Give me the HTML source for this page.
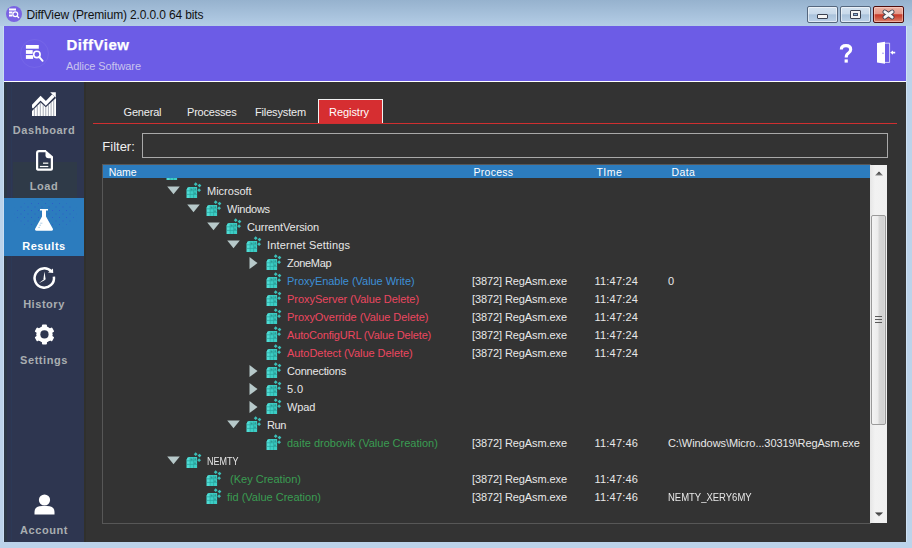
<!DOCTYPE html>
<html><head><meta charset="utf-8">
<style>
*{margin:0;padding:0;box-sizing:border-box}
html,body{width:912px;height:548px;overflow:hidden}
body{position:relative;background:#bcd3ea;font-family:"Liberation Sans",sans-serif}
.a{position:absolute}
.t{position:absolute;white-space:pre;line-height:1}
.tr{font-size:11px;line-height:18px;color:#e8e8e8}
.lbl{position:absolute;white-space:pre;line-height:1;font-weight:bold;font-size:11px;color:#a9aeb1;left:4px;width:80px;text-align:center;letter-spacing:0.55px}
.tab{position:absolute;white-space:pre;line-height:1;font-size:11px;color:#eeeeee}
.hd{position:absolute;white-space:pre;line-height:1;font-size:10.5px;color:#ffffff}
.wb{border-radius:2px}
</style></head><body>
<svg width="0" height="0" style="position:absolute">
 <defs>
  <g id="ri">
   <path d="M0.7 7.4 Q0.9 5.2 3.4 5 H11.1 V15.9 H0.7 Z" fill="#3ccdc5"/>
   <path d="M0.7 7.4 Q0.9 5.2 3.4 5 H4.2 V15.9 H0.7 Z" fill="#4fdcd4"/>
   <path d="M4.1 5.6V15.9M7.6 5.6V15.9M0.7 8.8H11.1M0.7 12.4H11.1" stroke="#2aa49d" stroke-width="0.7"/>
   <circle cx="5.6" cy="7.6" r="1" fill="#2b8a86" opacity="0.8"/>
   <circle cx="9.3" cy="7.2" r="1" fill="#2b8a86" opacity="0.8"/>
   <circle cx="9" cy="11.2" r="1" fill="#2b8a86" opacity="0.7"/>
   <path d="M9.7 0.3L11.6 2.2L9.7 4.1L7.8 2.2Z M13.5 1.7L15.4 3.6L13.5 5.5L11.6 3.6Z M13.1 6.3L15 8.2L13.1 10.1L11.2 8.2Z" fill="#3cbfb8"/>
  </g>
 </defs>
</svg>
<div class="a" style="left:0;top:0;width:912px;height:26px;background:linear-gradient(#96b2ce,#b4cde6)"></div>
<!-- title icon -->
<div class="a" style="left:6px;top:6px;width:16px;height:16px;border-radius:50%;background:#7a63e3"></div>
<svg class="a" style="left:6px;top:6px" width="16" height="16" viewBox="0 0 16 16">
 <path d="M3 3.5H10M3 6.6H6.5M3 9.5H6.5" stroke="#fff" stroke-width="2"/>
 <circle cx="9.3" cy="8.3" r="2.4" fill="none" stroke="#fff" stroke-width="1.2"/>
 <path d="M11 10L13 12" stroke="#fff" stroke-width="1.3"/>
</svg>
<div class="t" style="left:26.5px;top:8.6px;font-size:12px;color:#111;letter-spacing:-0.14px">DiffView (Premium) 2.0.0.0 64 bits</div>
<!-- window buttons -->
<div class="a wb" style="left:807px;top:6px;width:31px;height:17px;border:1px solid #55677e;box-shadow:inset 0 0 0 1px rgba(255,255,255,0.55);background:linear-gradient(#d4e2f0 0%,#c8d9ea 46%,#a9c2db 52%,#bdd2e7 100%)"></div>
<div class="a" style="left:817px;top:14px;width:11px;height:5px;background:#f4f4f4;border:1px solid #3b4150;border-radius:1px"></div>
<div class="a wb" style="left:840px;top:6px;width:31px;height:17px;border:1px solid #55677e;box-shadow:inset 0 0 0 1px rgba(255,255,255,0.55);background:linear-gradient(#d4e2f0 0%,#c8d9ea 46%,#a9c2db 52%,#bdd2e7 100%)"></div>
<div class="a" style="left:850px;top:10px;width:11px;height:9px;background:#f4f4f4;border:1px solid #3b4150;border-radius:1px"></div>
<div class="a" style="left:853px;top:13px;width:5px;height:3px;background:#8db4d6;border:1px solid #45506a"></div>
<div class="a wb" style="left:873px;top:6px;width:31px;height:17px;border:1px solid #4e0c0c;box-shadow:inset 0 0 0 1px rgba(255,220,210,0.5);background:linear-gradient(#eeb3a6 0%,#e49a8a 44%,#c8392a 52%,#cd4f3b 68%,#dc8670 100%)"></div>
<svg class="a" style="left:881px;top:9px" width="15" height="11" viewBox="0 0 15 11"><path d="M3.9 2.9 L11.1 8.1 M11.1 2.9 L3.9 8.1" stroke="#3b3f4c" stroke-width="4.6" stroke-linecap="round"/><path d="M3.9 2.9 L11.1 8.1 M11.1 2.9 L3.9 8.1" stroke="#f6f6f6" stroke-width="3" stroke-linecap="round"/></svg>

<!-- client -->
<div class="a" style="left:4px;top:26px;width:902px;height:516px;background:#333333"></div>
<div class="a" style="left:4px;top:26px;width:902px;height:55px;background:#6c5ce6"></div>
<div class="a" style="left:4px;top:81px;width:902px;height:1px;background:#ffffff"></div>
<div class="a" style="left:4px;top:82px;width:80px;height:460px;background:#2e3650"></div>
<div class="a" style="left:4px;top:82px;width:3px;height:460px;background:#2d3846"></div>
<div class="a" style="left:11px;top:82px;width:1px;height:460px;background:#2c3a58;opacity:0.7"></div>
<div class="a" style="left:84px;top:82px;width:2px;height:460px;background:#30302c"></div>
<div class="a" style="left:3px;top:26px;width:1px;height:516px;background:#c9def3"></div>
<div class="a" style="left:906px;top:26px;width:1px;height:516px;background:#cfe2f5"></div>

<!-- header -->
<div class="a" style="left:20px;top:39px;width:29px;height:29px;border-radius:50%;border:1px solid rgba(255,255,255,0.06)"></div>
<svg class="a" style="left:24px;top:43px" width="22" height="22" viewBox="0 0 22 22">
 <rect x="1.9" y="2" width="12.9" height="3.7" fill="#fff"/>
 <rect x="1.9" y="7.1" width="6.8" height="3.8" fill="#fff"/>
 <rect x="1.9" y="12.1" width="7.2" height="3.8" fill="#fff"/>
 <circle cx="12.9" cy="11.4" r="4.2" fill="#6c5ce6"/>
 <circle cx="12.9" cy="11.4" r="3.2" fill="none" stroke="#fff" stroke-width="1.6"/>
 <path d="M15.2 13.8L18.6 17.8" stroke="#fff" stroke-width="1.9" stroke-linecap="round"/>
</svg>
<div class="t" style="left:66.5px;top:37.3px;font-size:15px;font-weight:bold;color:#fff;letter-spacing:0.5px;-webkit-text-stroke:0.25px #fff">DiffView</div>
<div class="t" style="left:66px;top:60.5px;font-size:11px;color:#c9c3ee;letter-spacing:-0.1px">Adlice Software</div>
<!-- ? -->
<svg class="a" style="left:836px;top:40.6px" width="20" height="26" viewBox="0 0 20 26">
 <path d="M5.3 8.6 Q5.3 4.6 10 4.6 Q14.7 4.6 14.7 8.6 Q14.7 10.8 12.3 12.3 Q10.2 13.6 10.2 16.4" fill="none" stroke="#fff" stroke-width="3.1" stroke-linecap="butt"/>
 <rect x="8.6" y="18.4" width="3.2" height="3.2" fill="#fff"/>
</svg>
<!-- door -->
<svg class="a" style="left:874px;top:40px" width="24" height="26" viewBox="0 0 24 26">
 <path d="M3 3 L11 1.8 V23.8 L3 22.6 Z" fill="#fff"/>
 <path d="M11 3.2 H15.6 V22.4 H11" fill="none" stroke="#fff" stroke-width="0.9" opacity="0.8"/>
 <path d="M16.2 12.6 L19 10.4 V14.8 Z" fill="#fff"/><path d="M18 12.6 H21.2" stroke="#fff" stroke-width="1.7"/><circle cx="9" cy="13.2" r="0.7" fill="#8a7cf0"/>
</svg>

<!-- sidebar items -->
<svg class="a" style="left:32px;top:92px" width="24" height="24" viewBox="0 0 24 24">
 <defs><clipPath id="bars"><path d="M0 18.9 L8.6 10.5 L13.8 15.3 L24 6 V24 H0 Z"/></clipPath></defs>
 <g clip-path="url(#bars)">
  <rect x="0" y="0" width="24" height="24" fill="#fff"/>
  <path d="M2.4 0V24M5.3 0V24M8.3 0V24M11.2 0V24M13.8 0V24M16.4 0V24M19.1 0V24M21.7 0V24" stroke="#5a6275" stroke-width="0.6" opacity="0.9"/>
 </g>
 <path d="M-0.2 15.4 L8.6 6.2 L13.8 11.3 L21.4 3.5" fill="none" stroke="#fff" stroke-width="3.3" stroke-linejoin="miter"/>
 <path d="M18.2 0.3 H23.8 V5.8 Z" fill="#fff"/>
</svg>
<div class="lbl" style="top:124.6px">Dashboard</div>

<div class="a" style="left:12.6px;top:161.5px;width:64.4px;height:36.5px;background:#2f3a48"></div>
<svg class="a" style="left:36px;top:150px" width="18" height="22" viewBox="0 0 18 22">
 <path d="M10 1.1 H3 Q1.1 1.1 1.1 3 V18.7 Q1.1 19.6 3 19.6 H15 Q15.9 19.6 15.9 18.7 V7" fill="none" stroke="#fff" stroke-width="2.2"/>
 <path d="M9.5 0 L17 6.5 V8.2 H12.5 Q9.5 8.2 9.5 5.2 Z" fill="#fff"/>
 <path d="M7 13.2H12.3" stroke="#e8e8e8" stroke-width="1.4"/>
 <path d="M3.9 16.5H12.3" stroke="#fff" stroke-width="1.2"/>
</svg>
<div class="lbl" style="top:181px">Load</div>

<div class="a" style="left:4px;top:198px;width:80px;height:58px;background:#2c7cbe"></div>
<div class="a" style="left:14px;top:200px;width:63px;height:29px;background-image:radial-gradient(circle,rgba(45,75,205,0.6) 0.5px,transparent 0.9px),radial-gradient(circle,rgba(45,75,205,0.6) 0.5px,transparent 0.9px);background-size:7px 7px,7px 7px;background-position:0 0,3.5px 3.5px;-webkit-mask-image:radial-gradient(ellipse at center,#000 60%,transparent 80%)"></div>
<svg class="a" style="left:34px;top:208px" width="20" height="24" viewBox="0 0 20 24">
 <path d="M6 1 H14 V2.6 H12 V8.6 L19 21 Q19.4 22.8 17.6 22.8 H2.4 Q0.6 22.8 1 21 L8 8.6 V2.6 H6 Z" fill="#fff"/>
 <path d="M6.2 15.2H8.4M5.2 17.2H7M4.2 19.4H6" stroke="#7fb0d8" stroke-width="0.6"/>
</svg>
<div class="lbl" style="top:241px;color:#ffffff">Results</div>

<svg class="a" style="left:32px;top:266px" width="24" height="24" viewBox="0 0 24 24">
 <path d="M19.4 5.4 A9.7 9.7 0 1 0 21.9 10.6" fill="none" stroke="#fff" stroke-width="2.5"/>
 <path d="M21 2.4 L21.2 7 L16 6.6 Z" fill="#fff"/>
 <path d="M12.5 5.4 L13.6 13.2 L12.6 14.2 L11.4 13 Z" fill="#fff"/>
 <path d="M13.2 12.2 L6.8 17.2 L12.2 14.6 Z" fill="#fff"/>
</svg>
<div class="lbl" style="top:299.1px">History</div>

<svg class="a" style="left:34px;top:324px" width="21" height="21" viewBox="-10.45 -10.4 21 21">
 <g fill="#fff">
  <circle r="8.2"/>
  <rect x="-2.5" y="-10" width="5" height="20" rx="1"/>
  <rect x="-2.5" y="-10" width="5" height="20" rx="1" transform="rotate(60)"/>
  <rect x="-2.5" y="-10" width="5" height="20" rx="1" transform="rotate(-60)"/>
 </g>
 <circle r="4.1" fill="#2e3650"/>
</svg>
<div class="lbl" style="top:355.3px">Settings</div>

<svg class="a" style="left:34px;top:493px" width="22" height="23" viewBox="0 0 22 23">
 <circle cx="10.5" cy="7" r="5.6" fill="#fff"/>
 <path d="M0.5 21.6 V19 Q0.5 12.9 8 12.9 H13 Q20.5 12.9 20.5 19 V21.6 Z" fill="#fff"/>
</svg>
<div class="lbl" style="top:524.6px">Account</div>

<!-- tabs -->
<div class="a" style="left:318px;top:99px;width:65px;height:25px;background:#d62e31;border:1px solid #f2f2f2;border-bottom:none"></div>
<div class="a" style="left:93px;top:123px;width:804px;height:1px;background:#cf2f30"></div>
<div class="tab" style="left:123.6px;top:107px;letter-spacing:-0.2px">General</div>
<div class="tab" style="left:187px;top:107px;letter-spacing:-0.2px">Processes</div>
<div class="tab" style="left:255px;top:107px;letter-spacing:-0.15px">Filesystem</div>
<div class="tab" style="left:329px;top:107px;letter-spacing:-0.05px;color:#fff">Registry</div>

<!-- filter -->
<div class="t" style="left:102.3px;top:139.7px;font-size:13px;color:#f0f0f0">Filter:</div>
<div class="a" style="left:142px;top:133px;width:746px;height:25px;border:1px solid #a9a9a9"></div>

<!-- table -->
<div class="a" style="left:102px;top:164px;width:769px;height:360px;border:1px solid #575757;border-right:none"></div>
<div class="a" style="left:103px;top:165px;width:767px;height:13px;background:#2c7cbe"></div>
<div class="hd" style="left:108.8px;top:166.8px;letter-spacing:-0.1px">Name</div>
<div class="hd" style="left:473.6px;top:166.8px;letter-spacing:0.25px">Process</div>
<div class="hd" style="left:596.4px;top:166.8px;letter-spacing:0.5px">TIme</div>
<div class="hd" style="left:671.4px;top:166.8px;letter-spacing:0.45px">Data</div>

<div class="a" style="left:103px;top:178px;width:767px;height:345px;overflow:hidden">
 <div class="a" style="left:-103px;top:-178px;width:912px;height:548px">
<svg class="a" style="left:166px;top:164px" width="16" height="17" viewBox="0 0 16 17"><use href="#ri"/></svg>
<svg class="a" style="left:166.5px;top:185.5px" width="13" height="9" viewBox="0 0 13 9"><path d="M0.2 0.4H12.8L6.5 8.2Z" fill="#b7c9ca"/></svg>
<svg class="a" style="left:186px;top:182px" width="16" height="17" viewBox="0 0 16 17"><use href="#ri"/></svg>
<div class="t tr" style="left:207px;top:182px;color:#e8e8e8;letter-spacing:0px">Microsoft</div>
<svg class="a" style="left:186.5px;top:203.5px" width="13" height="9" viewBox="0 0 13 9"><path d="M0.2 0.4H12.8L6.5 8.2Z" fill="#b7c9ca"/></svg>
<svg class="a" style="left:206px;top:200px" width="16" height="17" viewBox="0 0 16 17"><use href="#ri"/></svg>
<div class="t tr" style="left:227px;top:200px;color:#e8e8e8;letter-spacing:-0.25px">Windows</div>
<svg class="a" style="left:206.5px;top:221.5px" width="13" height="9" viewBox="0 0 13 9"><path d="M0.2 0.4H12.8L6.5 8.2Z" fill="#b7c9ca"/></svg>
<svg class="a" style="left:226px;top:218px" width="16" height="17" viewBox="0 0 16 17"><use href="#ri"/></svg>
<div class="t tr" style="left:247px;top:218px;color:#e8e8e8;letter-spacing:-0.1px">CurrentVersion</div>
<svg class="a" style="left:226.5px;top:239.5px" width="13" height="9" viewBox="0 0 13 9"><path d="M0.2 0.4H12.8L6.5 8.2Z" fill="#b7c9ca"/></svg>
<svg class="a" style="left:246px;top:236px" width="16" height="17" viewBox="0 0 16 17"><use href="#ri"/></svg>
<div class="t tr" style="left:267px;top:236px;color:#e8e8e8;letter-spacing:0.18px">Internet Settings</div>
<svg class="a" style="left:249px;top:257px" width="9" height="12" viewBox="0 0 9 12"><path d="M0.5 0V12L8.5 6Z" fill="#b7c9ca"/></svg>
<svg class="a" style="left:266px;top:254px" width="16" height="17" viewBox="0 0 16 17"><use href="#ri"/></svg>
<div class="t tr" style="left:287px;top:254px;color:#e8e8e8;letter-spacing:-0.3px">ZoneMap</div>
<svg class="a" style="left:266px;top:272px" width="16" height="17" viewBox="0 0 16 17"><use href="#ri"/></svg>
<div class="t tr" style="left:287px;top:272px;color:#3d8fd6;letter-spacing:-0.04px">ProxyEnable (Value Write)</div>
<div class="t tr" style="left:472px;top:272px;letter-spacing:-0.1px">[3872] RegAsm.exe</div>
<div class="t tr" style="left:594.5px;top:272px;letter-spacing:0.2px">11:47:24</div>
<div class="t tr" style="left:668px;top:272px">0</div>
<svg class="a" style="left:266px;top:290px" width="16" height="17" viewBox="0 0 16 17"><use href="#ri"/></svg>
<div class="t tr" style="left:287px;top:290px;color:#ec4760;letter-spacing:-0.04px">ProxyServer (Value Delete)</div>
<div class="t tr" style="left:472px;top:290px;letter-spacing:-0.1px">[3872] RegAsm.exe</div>
<div class="t tr" style="left:594.5px;top:290px;letter-spacing:0.2px">11:47:24</div>
<svg class="a" style="left:266px;top:308px" width="16" height="17" viewBox="0 0 16 17"><use href="#ri"/></svg>
<div class="t tr" style="left:287px;top:308px;color:#ec4760;letter-spacing:-0.05px">ProxyOverride (Value Delete)</div>
<div class="t tr" style="left:472px;top:308px;letter-spacing:-0.1px">[3872] RegAsm.exe</div>
<div class="t tr" style="left:594.5px;top:308px;letter-spacing:0.2px">11:47:24</div>
<svg class="a" style="left:266px;top:326px" width="16" height="17" viewBox="0 0 16 17"><use href="#ri"/></svg>
<div class="t tr" style="left:287px;top:326px;color:#ec4760;letter-spacing:-0.16px">AutoConfigURL (Value Delete)</div>
<div class="t tr" style="left:472px;top:326px;letter-spacing:-0.1px">[3872] RegAsm.exe</div>
<div class="t tr" style="left:594.5px;top:326px;letter-spacing:0.2px">11:47:24</div>
<svg class="a" style="left:266px;top:344px" width="16" height="17" viewBox="0 0 16 17"><use href="#ri"/></svg>
<div class="t tr" style="left:287px;top:344px;color:#ec4760;letter-spacing:-0.05px">AutoDetect (Value Delete)</div>
<div class="t tr" style="left:472px;top:344px;letter-spacing:-0.1px">[3872] RegAsm.exe</div>
<div class="t tr" style="left:594.5px;top:344px;letter-spacing:0.2px">11:47:24</div>
<svg class="a" style="left:249px;top:365px" width="9" height="12" viewBox="0 0 9 12"><path d="M0.5 0V12L8.5 6Z" fill="#b7c9ca"/></svg>
<svg class="a" style="left:266px;top:362px" width="16" height="17" viewBox="0 0 16 17"><use href="#ri"/></svg>
<div class="t tr" style="left:287px;top:362px;color:#e8e8e8;letter-spacing:-0.2px">Connections</div>
<svg class="a" style="left:249px;top:383px" width="9" height="12" viewBox="0 0 9 12"><path d="M0.5 0V12L8.5 6Z" fill="#b7c9ca"/></svg>
<svg class="a" style="left:266px;top:380px" width="16" height="17" viewBox="0 0 16 17"><use href="#ri"/></svg>
<div class="t tr" style="left:287px;top:380px;color:#e8e8e8;letter-spacing:0.4px">5.0</div>
<svg class="a" style="left:249px;top:401px" width="9" height="12" viewBox="0 0 9 12"><path d="M0.5 0V12L8.5 6Z" fill="#b7c9ca"/></svg>
<svg class="a" style="left:266px;top:398px" width="16" height="17" viewBox="0 0 16 17"><use href="#ri"/></svg>
<div class="t tr" style="left:287px;top:398px;color:#e8e8e8;letter-spacing:-0.1px">Wpad</div>
<svg class="a" style="left:226.5px;top:419.5px" width="13" height="9" viewBox="0 0 13 9"><path d="M0.2 0.4H12.8L6.5 8.2Z" fill="#b7c9ca"/></svg>
<svg class="a" style="left:246px;top:416px" width="16" height="17" viewBox="0 0 16 17"><use href="#ri"/></svg>
<div class="t tr" style="left:267px;top:416px;color:#e8e8e8;letter-spacing:-0.4px">Run</div>
<svg class="a" style="left:266px;top:434px" width="16" height="17" viewBox="0 0 16 17"><use href="#ri"/></svg>
<div class="t tr" style="left:287px;top:434px;color:#3a9d52;letter-spacing:0px">daite drobovik (Value Creation)</div>
<div class="t tr" style="left:472px;top:434px;letter-spacing:-0.1px">[3872] RegAsm.exe</div>
<div class="t tr" style="left:594.5px;top:434px;letter-spacing:0.2px">11:47:46</div>
<div class="t tr" style="left:668px;top:434px;letter-spacing:-0.076px">C:\Windows\Micro...30319\RegAsm.exe</div>
<svg class="a" style="left:166.5px;top:455.5px" width="13" height="9" viewBox="0 0 13 9"><path d="M0.2 0.4H12.8L6.5 8.2Z" fill="#b7c9ca"/></svg>
<svg class="a" style="left:186px;top:452px" width="16" height="17" viewBox="0 0 16 17"><use href="#ri"/></svg>
<div class="t tr" style="left:207px;top:452px;color:#e8e8e8;letter-spacing:0px;transform:scaleX(0.82);transform-origin:0 0">NEMTY</div>
<svg class="a" style="left:206px;top:470px" width="16" height="17" viewBox="0 0 16 17"><use href="#ri"/></svg>
<div class="t tr" style="left:227px;top:470px;color:#3a9d52;letter-spacing:0px"> (Key Creation)</div>
<div class="t tr" style="left:472px;top:470px;letter-spacing:-0.1px">[3872] RegAsm.exe</div>
<div class="t tr" style="left:594.5px;top:470px;letter-spacing:0.2px">11:47:46</div>
<svg class="a" style="left:206px;top:488px" width="16" height="17" viewBox="0 0 16 17"><use href="#ri"/></svg>
<div class="t tr" style="left:227px;top:488px;color:#3a9d52;letter-spacing:0px">fid (Value Creation)</div>
<div class="t tr" style="left:472px;top:488px;letter-spacing:-0.1px">[3872] RegAsm.exe</div>
<div class="t tr" style="left:594.5px;top:488px;letter-spacing:0.2px">11:47:46</div>
<div class="t tr" style="left:668px;top:488px;transform:scaleX(0.862);transform-origin:0 0">NEMTY_XERY6MY</div>
 </div>
</div>

<!-- scrollbar -->
<div class="a" style="left:870px;top:165px;width:17px;height:358px;background:linear-gradient(90deg,#e6e6e6,#f2f2f2 30%,#f0f0f0)"></div>
<svg class="a" style="left:874px;top:170px" width="10" height="7" viewBox="0 0 10 7"><defs><linearGradient id="ag1" x1="0" y1="0" x2="0" y2="1"><stop offset="0" stop-color="#2a2a2a"/><stop offset="1" stop-color="#8a8a8a"/></linearGradient></defs><path d="M1 5.5 L5 1.5 L9 5.5Z" fill="url(#ag1)"/></svg>
<svg class="a" style="left:874px;top:511px" width="10" height="7" viewBox="0 0 10 7"><path d="M1 1.5 L5 5.5 L9 1.5Z" fill="url(#ag1)"/></svg>
<div class="a" style="left:871px;top:215px;width:15px;height:210px;border:1px solid #9a9a9a;border-radius:2px;background:linear-gradient(90deg,#f4f4f4 0%,#ececec 45%,#d8d8d8 55%,#d2d2d2 90%,#e0e0e0 100%)"></div>
<div class="a" style="left:875px;top:316px;width:7px;height:1.1px;background:#5a5a5a"></div>
<div class="a" style="left:875px;top:319px;width:7px;height:1.1px;background:#5a5a5a"></div>
<div class="a" style="left:875px;top:322px;width:7px;height:1.1px;background:#5a5a5a"></div>
</body></html>
